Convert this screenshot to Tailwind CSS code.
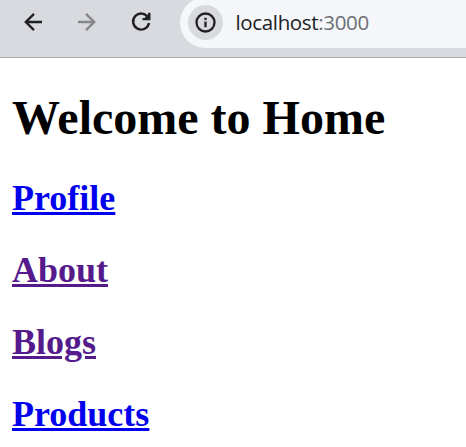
<!DOCTYPE html>
<html lang="en">
<head>
<meta charset="utf-8">
<title>localhost:3000</title>
<script src="https://cdn.jsdelivr.net/npm/@tailwindcss/browser@4"></script>
</head>
<body class="bg-white h-[447px] overflow-hidden">
<header class="flex h-[58px] items-start overflow-hidden border-b border-[#a8a9ad] bg-[#d9dadf]">
  <nav class="flex w-[180px] shrink-0 text-[#202124]">
    <svg class="h-[57px] w-[180px]" viewBox="0 0 180 57" fill="none" stroke="currentColor" stroke-width="2.4">
      <path d="M42 22H25.500M34 13.800L25.800 22L34 30.200"/>
      <path stroke="#86878b" d="M78 22H94.500M86 13.800L94.200 22L86 30.200"/>
      <path d="M148.200 17.800A8 8 0 1 0 149 23M149.300 12.800V19.100H142.500M145.500 18.500L149 15"/>
    </svg>
  </nav>
  <div class="-mt-[3px] flex h-[51px] flex-1 items-center rounded-l-full bg-[#f5f7fa] pl-[8px]">
    <span class="flex size-[35px] items-center justify-center rounded-full bg-[#d9dadf]">
      <svg class="size-[21px]" viewBox="0 0 21 21" fill="none" stroke="#202124" stroke-width="2.3">
        <circle cx="10.500" cy="10.500" r="9"/>
        <path d="M10.500 9.500V15.200M10.500 5.700V7.900"/>
      </svg>
    </span>
    <span class="-mt-[2px] ml-[12.5px] whitespace-nowrap font-['Open_Sans',sans-serif] text-[20.5px] leading-[28px] tracking-[-0.35px] text-[#202124]">localhost<span class="text-[#6b6e73]">:3000</span></span>
  </div>
</header>
<main class="flex flex-col items-start px-[12px] pt-[33px] font-['Liberation_Serif',serif] font-bold">
  <h1 class="whitespace-nowrap text-[48px] leading-[54px] text-black">Welcome to Home</h1>
  <div class="mt-[32px] flex flex-col items-start gap-[30px] text-[36px] leading-[42px] text-[#0000ee]">
    <h2><a class="underline decoration-[3px] underline-offset-[2px]" href="#profile">Profile</a></h2>
    <h2><a class="text-[#551a8b] underline decoration-[3px] underline-offset-[2px]" href="#about">About</a></h2>
    <h2><a class="text-[#551a8b] underline decoration-[3px] underline-offset-[2px]" href="#blogs">Blogs</a></h2>
    <h2><a class="underline decoration-[3px] underline-offset-[2px]" href="#products">Products</a></h2>
  </div>
</main>
</body>
</html>
